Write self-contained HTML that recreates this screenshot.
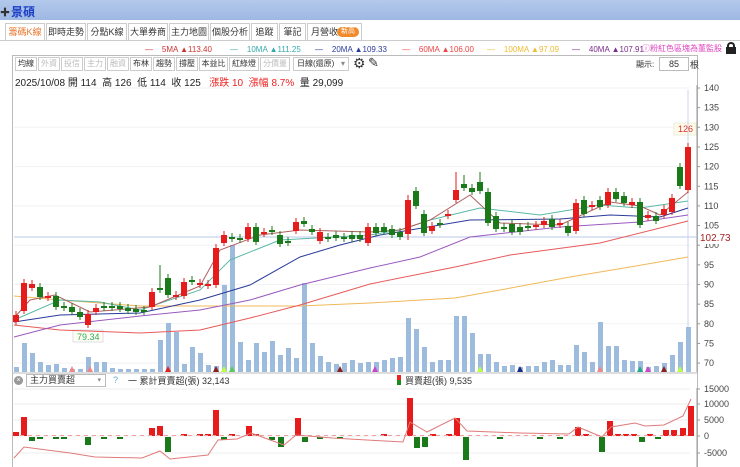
<!DOCTYPE html>
<html><head><meta charset="utf-8">
<style>
*{margin:0;padding:0;box-sizing:border-box}
body{width:740px;height:467px;overflow:hidden;background:#fff;font-family:"Liberation Sans","Noto Sans CJK TC",sans-serif;font-size:10px;color:#333;position:relative}
.a{position:absolute;white-space:nowrap}
#title{left:0;top:0;width:740px;height:20px;background:linear-gradient(#b3c9ec,#9fb8e2)}
.tab{position:absolute;top:23px;height:17px;border:1px solid #ccc;border-bottom:none;background:#fff;font-size:9px;line-height:16px;text-align:center;color:#333;overflow:hidden}
.tb{position:absolute;top:57px;height:14px;border:1px solid #ccc;font-size:8px;line-height:12px;text-align:center;color:#333;background:#fff;overflow:hidden}
.tb.d{color:#bbb}
.lg{position:absolute;top:45px;font-size:8px;white-space:nowrap}
</style></head><body>
<div class="a" id="title"></div>
<div class="a" style="left:0;top:4px;font-size:10px;font-weight:bold">✚</div>
<div class="a" style="left:11px;top:3px;font-size:12px;color:#1d3fc6;font-weight:bold">景碩</div>
<div class="a" style="left:0;top:40px;width:740px;height:1px;background:#ccc"></div>
<div class="tab" style="left:5px;width:40px;color:#e8742a">籌碼K線</div>
<div class="tab" style="left:46px;width:40px">即時走勢</div>
<div class="tab" style="left:87px;width:40px">分點K線</div>
<div class="tab" style="left:128px;width:40px">大單券商</div>
<div class="tab" style="left:169px;width:40px">主力地圖</div>
<div class="tab" style="left:210px;width:40px">個股分析</div>
<div class="tab" style="left:251px;width:27px">追蹤</div>
<div class="tab" style="left:279px;width:27px">筆記</div>
<div class="tab" style="left:307px;width:55px;text-align:left;padding-left:3px">月營收</div>
<div class="a" style="left:337px;top:27px;width:22px;height:10px;border-radius:5px;background:#f08a2a;color:#fff;font-size:7px;line-height:10px;text-align:center">新高</div>

<div class="lg" style="left:145px;color:#c33">—&nbsp;&nbsp;&nbsp;&nbsp;5MA ▲113.40</div>
<div class="lg" style="left:230px;color:#3aa">—&nbsp;&nbsp;&nbsp;&nbsp;10MA ▲111.25</div>
<div class="lg" style="left:315px;color:#2a3a9a">—&nbsp;&nbsp;&nbsp;&nbsp;20MA ▲109.33</div>
<div class="lg" style="left:402px;color:#e44">—&nbsp;&nbsp;&nbsp;&nbsp;60MA ▲106.00</div>
<div class="lg" style="left:487px;color:#eb3">—&nbsp;&nbsp;&nbsp;&nbsp;100MA ▲97.09</div>
<div class="lg" style="left:572px;color:#7a2a8a">—&nbsp;&nbsp;&nbsp;&nbsp;40MA ▲107.91</div>
<div class="a" style="top:43px;left:642px;font-size:8px;color:#e040c0">ⓘ粉紅色區塊為董監股</div>
<div class="a" style="top:42px;left:727px;width:8px;height:6px;border:2px solid #222;border-bottom:none;border-radius:4px 4px 0 0"></div>
<div class="a" style="top:47px;left:726px;width:10px;height:7px;background:#222"></div>

<div class="a" style="left:12px;top:55px;width:686px;height:412px;border:1px solid #bbb;border-bottom:none"></div>
<div class="tb" style="left:15px;width:22px">均線</div>
<div class="tb d" style="left:38px;width:22px">外資</div>
<div class="tb d" style="left:61px;width:22px">投信</div>
<div class="tb d" style="left:84px;width:22px">主力</div>
<div class="tb d" style="left:107px;width:22px">融資</div>
<div class="tb" style="left:130px;width:22px">布林</div>
<div class="tb" style="left:153px;width:22px">趨勢</div>
<div class="tb" style="left:176px;width:22px">撐壓</div>
<div class="tb" style="left:199px;width:29px">本益比</div>
<div class="tb" style="left:229px;width:30px">紅綠燈</div>
<div class="tb d" style="left:260px;width:30px">分價量</div>
<div class="tb" style="left:293px;width:56px;text-align:left;padding-left:3px">日線(還原) <span style="color:#888;position:absolute;right:3px">▾</span></div>
<div class="a" style="left:353px;top:55px;font-size:14px">⚙</div>
<div class="a" style="left:368px;top:55px;font-size:13px">✎</div>
<div class="a" style="left:15px;top:74px;font-size:10px;color:#222">2025/10/08 開 114&nbsp; 高 126&nbsp; 低 114&nbsp; 收 125&nbsp;&nbsp; <span style="color:#e22">漲跌 10&nbsp; 漲幅 8.7%</span>&nbsp; 量 29,099</div>
<div class="a" style="left:636px;top:59px;font-size:8px">顯示:</div>
<div class="a" style="left:659px;top:57px;width:30px;height:14px;border:1px solid #bbb;font-size:9px;text-align:center;line-height:12px;background:#fff">85</div>
<div class="a" style="left:690px;top:58px;font-size:9px">根</div>

<div class="a" style="left:14px;top:376px;width:9px;height:9px;border-radius:50%;background:#999;color:#fff;font-size:7px;line-height:9px;text-align:center">×</div>
<div class="a" style="left:26px;top:374px;width:80px;height:13px;border:1px solid #bbb;font-size:9px;line-height:11px;padding-left:3px">主力買賣超 <span style="position:absolute;right:4px;color:#888;font-size:7px">▾</span></div>
<div class="a" style="left:113px;top:375px;font-size:9px;color:#6ac">?</div>
<div class="a" style="left:128px;top:374px;font-size:9px;color:#333">一 累計買賣超(張) 32,143</div>
<div class="a" style="left:397px;top:375px;width:4px;height:5px;background:#e22"></div>
<div class="a" style="left:397px;top:380px;width:4px;height:5px;background:#1a8a1a"></div>
<div class="a" style="left:405px;top:374px;font-size:9px;color:#333">買賣超(張) 9,535</div>

<svg class="a" style="left:0;top:0" width="740" height="467" id="s"></svg>
<script>
var s=document.getElementById('s'),h='';
function L(x1,y1,x2,y2,c,w){h+='<line x1="'+x1+'" y1="'+y1+'" x2="'+x2+'" y2="'+y2+'" stroke="'+c+'" stroke-width="'+(w||1)+'"/>';}
function R(x,y,w,hh,c){h+='<rect x="'+x+'" y="'+y+'" width="'+w+'" height="'+hh+'" fill="'+c+'"/>';}
function P(pts,c,w){h+='<polyline fill="none" stroke="'+c+'" stroke-width="'+(w||1)+'" points="'+pts+'"/>';}
function T(x,y,t,c,fs){h+='<text x="'+x+'" y="'+y+'" fill="'+(c||'#444')+'" font-size="'+(fs||9)+'" font-family="Liberation Sans,sans-serif">'+t+'</text>';}
L(697,85,697,372,'#999');L(697,388,697,467,'#999');
for(var p=70;p<=140;p+=5){var y=88+(140-p)*3.93;L(697,y,700,y,'#999');T(704,y+3,p,'#444',9);if(p%10==0)L(14,y,690,y,'#f2f2f2');}
L(14,237,697,237,'#b8c8e8');
R(698,230,42,14,'#fff');T(700,241,'102.73','#a22',10);
R(674,123,22,12,'#fffbe8');h+='<rect x="674" y="123" width="22" height="12" fill="none" stroke="#eed"/>';T(678,132,'126','#d33',9);
L(688,90,688,372,'#c8d4ee');
var v=[367,343,353,362,365,364,368,369,369,357,362,362,368,369,369,369,369,369,340,323,332,364,347,353,365,366,285,245,342,360,343,352,341,355,348,358,283,343,356,362,364,363,360,363,362,362,360,358,357,318,329,347,362,360,360,316,316,333,354,354,362,366,365,367,366,366,362,360,365,365,345,352,362,322,346,346,360,361,361,367,366,363,355,342,327];
for(var i=0;i<85;i++){R(14+8*i,v[i],5,372-v[i],'#9dbbdc');}
[[90,'#e88'],[72,'#e88'],[168,'#d22'],[216,'#822'],[224,'#bf4'],[232,'#5c5'],[340,'#822'],[375,'#c4c'],[600,'#e88'],[648,'#c4c'],[640,'#2a8'],[680,'#bf4'],[664,'#822'],[520,'#1a2a8a'],[480,'#bf4']].forEach(function(m){h+='<polygon points="'+(m[0]-3)+',372 '+(m[0]+3)+',372 '+m[0]+',366" fill="'+m[1]+'"/>';});
R(73,330,30,12,'#fffef0');h+='<rect x="73" y="330" width="30" height="12" fill="none" stroke="#dde"/>';T(77,340,'79.34','#3a6',9);
P('14,296 60,300 140,306 200,306 300,306 370,303 455,298 500,290 570,277 630,267 688,257','#f0b85a');
P('14,325 60,330 140,333 200,330 250,318 300,305 370,284 455,267 510,255 600,243 688,221','#e85a5a');
P('14,337 60,325 140,316 200,310 250,300 300,285 370,268 420,257 470,237 560,227 640,222 688,215','#9a5ac0');
P('14,322 60,315 140,313 200,300 250,285 300,257 340,245 380,235 470,220 560,219 610,215 660,217 688,208','#2a3a9a');
P('14,320 60,300 100,302 140,310 200,290 230,260 280,240 370,235 400,230 430,220 480,208 540,215 600,205 640,208 688,201','#5ab8a8');
P('14,318 30,300 55,295 90,312 150,307 200,286 220,250 260,235 300,230 370,232 400,230 430,220 470,195 500,223 560,225 610,202 640,206 660,215 688,192','#b06060');
var r='#e61b1b',g='#1a7a1a';
var c=[[16,315,322,r],[24,283,311,r],[32,284,288,r],[40,287,297,g],[48,296,298,r],[56,296,307,g],[64,306,308,g],[72,307,312,g],[80,312,317,g],[88,314,325,r],[96,308,312,r],[104,306,308,g],[112,306,308,g],[120,306,309,g],[128,308,311,g],[136,309,312,g],[144,310,312,g],[152,292,307,r],[160,288,290,g],[168,278,295,g],[176,295,297,r],[184,282,296,r],[192,280,282,g],[200,283,285,r],[208,284,286,r],[216,248,285,r],[224,235,243,r],[232,237,239,g],[240,238,240,g],[248,227,239,r],[256,227,242,g],[264,232,234,r],[272,230,232,g],[280,235,244,g],[288,241,243,g],[296,222,231,r],[304,221,224,g],[312,229,232,g],[320,232,241,r],[328,237,239,g],[336,235,238,g],[344,237,239,g],[352,235,239,g],[360,235,239,g],[368,227,243,r],
[376,227,233,g],[384,227,232,g],[392,229,235,g],[400,232,237,g],[408,200,234,r],[416,191,206,g],[424,214,233,g],[432,226,231,r],[440,223,225,g],[448,214,216,r],[456,190,200,r],[464,184,188,g],[472,188,192,g],[480,182,191,g],[488,192,223,g],[496,216,229,g],[504,227,229,g],[512,224,232,g],[520,227,232,g],[528,226,228,g],[536,225,227,r],[544,221,225,r],[552,219,227,g],[560,223,225,r],[568,226,233,g],[576,203,231,r],[584,200,214,g],[592,205,207,r],[600,200,207,g],[608,192,205,r],[616,192,199,g],[624,196,203,g],[632,202,205,r],[640,202,225,g],[648,215,218,r],[656,216,221,g],[664,209,215,r],[672,198,212,r],[680,167,186,g],[688,147,190,r]];
c.forEach(function(k){L(k[0],k[1]-4,k[0],k[2]+3,k[3]);R(k[0]-3,k[1],6,Math.max(2,k[2]-k[1]),k[3]);});
L(160,265,160,290,g);L(408,195,408,240,r);L(480,172,480,191,g);L(464,175,464,188,g);L(456,172,456,190,r);
L(12,373,697,373,'#bbb');
[[389,'15000'],[404,'10000'],[420,'5000'],[436,'0'],[453,'-5000']].forEach(function(a){L(14,a[0],690,a[0],'#eee');L(697,a[0],700,a[0],'#999');T(704,a[0]+3,a[1],'#444',9);});
var b=[[16,432,436],[24,417,436],[32,437,441,1],[40,437,439,1],[56,437,439,1],[64,437,439,1],[88,437,445,1],[104,437,439,1],[120,437,439,1],[152,428,436],[160,426,436],[168,437,452,1],[184,434,436],[200,434,436],[208,434,436],[216,410,436],[224,437,440,1],[232,434,436],[249,426,436],[256,434,436],[272,437,440,1],[281,437,447,1],[298,418,436],[305,437,442,1],[320,437,439,1],[340,437,439,1],[384,434,436],[410,398,436],[417,437,448,1],[425,437,447,1],[433,434,436],[449,434,436],[457,418,436],[466,437,460,1],[500,437,439,1],[540,437,439,1],[560,437,439,1],[578,427,436],[586,434,436],[602,437,452,1],[610,421,436],[618,434,436],[626,434,436],[634,434,436],[642,437,442,1],[650,434,436],[658,437,439,1],[666,430,436],[674,430,436],[683,428,436],[691,406,436]];
b.forEach(function(k){R(k[0]-3,k[1],6,k[2]-k[1],k[3]?g:r);});
for(var x=20;x<690;x+=8){R(x,435,4,1,'#f0a0a0');}
P('14,458 24,447 70,453 95,457 142,458 160,451 170,459 208,455 218,440 237,439 251,433 284,445 296,435 332,438 403,442 410,422 427,432 455,418 467,431 520,433 569,434 578,427 602,437 611,427 635,423 645,426 664,425 683,416 691,399','#e07a7a');
s.innerHTML=h;
</script>
</body></html>
